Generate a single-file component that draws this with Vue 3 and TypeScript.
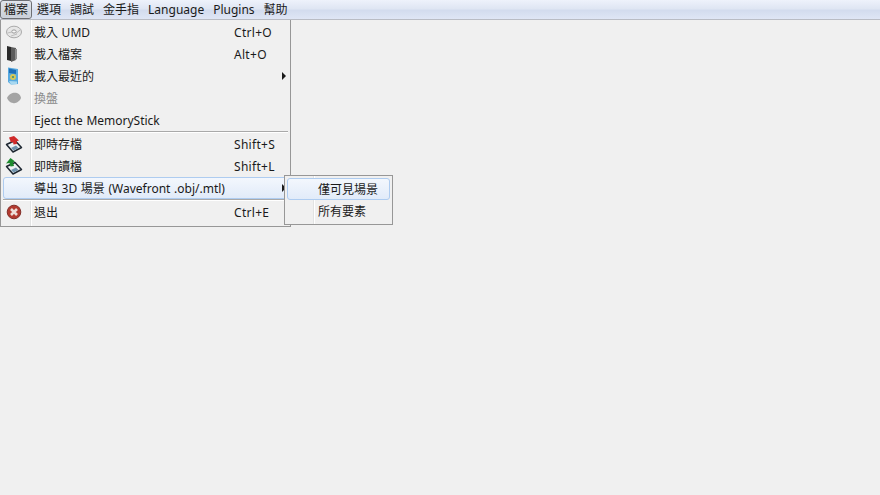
<script setup lang="ts">
interface Item {
  label: string
  shortcut?: string
  icon?: string
  arrow?: boolean
  disabled?: boolean
  active?: boolean
}

const menus = ['檔案', '選項', '調試', '金手指', 'Language', 'Plugins', '幫助']

const groups: Item[][] = [
  [
    { label: '載入 UMD', shortcut: 'Ctrl+O', icon: 'disc' },
    { label: '載入檔案', shortcut: 'Alt+O', icon: 'book' },
    { label: '載入最近的', icon: 'recent', arrow: true },
    { label: '換盤', icon: 'swap', disabled: true },
    { label: 'Eject the MemoryStick' },
  ],
  [
    { label: '即時存檔', shortcut: 'Shift+S', icon: 'save' },
    { label: '即時讀檔', shortcut: 'Shift+L', icon: 'load' },
    { label: '導出 3D 場景 (Wavefront .obj/.mtl)', arrow: true, active: true },
  ],
  [{ label: '退出', shortcut: 'Ctrl+E', icon: 'exit' }],
]

const subItems = [
  { label: '僅可見場景', active: true },
  { label: '所有要素', active: false },
]
</script>

<template>
  <div class="app">
    <nav class="menubar">
      <span v-for="(m, i) in menus" :key="m" class="top" :class="{ open: i === 0 }">{{ m }}</span>
    </nav>

    <div class="menu">
      <template v-for="(group, g) in groups" :key="g">
        <div v-if="g > 0" class="sep"></div>
        <div
          v-for="item in group"
          :key="item.label"
          class="row"
          :class="{ active: item.active, disabled: item.disabled }"
        >
          <span class="icon">
            <svg v-if="item.icon === 'disc'" width="18" height="16" viewBox="0 0 18 16">
              <ellipse cx="9" cy="8" rx="7.5" ry="5.8" fill="#e6e6e6" stroke="#aaaaaa" />
              <ellipse cx="9" cy="7.5" rx="2.2" ry="1.6" fill="#f8f8f8" stroke="#9a9a9a" />
              <path d="M2.5 9 L7 8 M11 9.5 L15 6 M6 12 L12 10" stroke="#bdbdbd" />
            </svg>
            <svg v-else-if="item.icon === 'book'" width="18" height="18" viewBox="0 0 18 18" class="nudge-book">
              <path d="M3 1 L7 2 L7 16 L3 15 Z" fill="#2a2a2a" />
              <path d="M7 2 L12 3 L12 15 L7 17 Z" fill="#5c5c5c" />
              <path d="M11 4 L13 4 L13 14 L11 15 Z" fill="#8f8f8f" />
            </svg>
            <svg v-else-if="item.icon === 'recent'" width="18" height="18" viewBox="0 0 18 18" class="nudge-recent">
              <path d="M4 0.5 L14 2 L14 17 L7 17.5 L4 15 Z" fill="#57a9df" />
              <path d="M5 1.5 L12 3 L12 7 L5 6 Z" fill="#1f6fb8" />
              <circle cx="9" cy="10" r="3" fill="#d6c856" />
              <circle cx="9" cy="10" r="1.1" fill="#3f8f7f" />
              <path d="M5 14 L13 14.5 L13 17 L7 17.5 Z" fill="#a8d8f0" />
            </svg>
            <svg v-else-if="item.icon === 'swap'" width="18" height="14" viewBox="0 0 18 14">
              <path d="M2 7 C4 2 9 1 12 2 C15 3 16 6 16 7 C15 10 11 13 8 12 C5 12 3 9 2 7 Z" fill="#a4a4a4" />
            </svg>
            <svg v-else-if="item.icon === 'save' || item.icon === 'load'" width="18" height="18" viewBox="0 0 18 18">
              <path d="M1.5 9.5 L10 5.5 L16.5 12.5 L8 17 Z" fill="#eef2f5" stroke="#1d2630" stroke-width="1.5" stroke-linejoin="round" />
              <path d="M6 13 L11 10.5 L13.5 13 L8.5 15.5 Z" fill="#6f93ad" />
              <path
                v-if="item.icon === 'save'"
                d="M4 2.5 L9 1 L14 5.5 L11.5 6.2 L12 9 L8.5 9.5 L8 7 L6 7.5 Z"
                fill="#cf2a2a"
              />
              <path v-else d="M1 6.5 L5.5 1 L10 4.5 L8 5.2 L9 9 L5.5 9.5 L4.5 6 Z" fill="#1c8a2e" />
            </svg>
            <svg v-else-if="item.icon === 'exit'" width="16" height="16" viewBox="0 0 16 16">
              <circle cx="8" cy="8" r="6.8" fill="#b23a30" stroke="#83302a" />
              <path d="M5 5 L11 11 M11 5 L5 11" stroke="#eedfd9" stroke-width="2.6" />
            </svg>
          </span>
          <span class="label">{{ item.label }}</span>
          <span v-if="item.shortcut" class="shortcut">{{ item.shortcut }}</span>
          <span v-if="item.arrow" class="arrow"></span>
        </div>
      </template>
    </div>

    <div class="submenu">
      <div v-for="s in subItems" :key="s.label" class="sub-row" :class="{ active: s.active }">
        <span class="sub-label">{{ s.label }}</span>
      </div>
    </div>
  </div>
</template>

<style scoped>
.app {
  position: relative;
  width: 880px;
  height: 495px;
  overflow: hidden;
  background: #f0f0f0;
  color: #1a1a1a;
  font-family: "Noto Sans", "Noto Sans CJK TC", sans-serif;
  font-size: 12px;
}
.menubar {
  display: flex;
  align-items: center;
  height: 20px;
  box-sizing: border-box;
  border-bottom: 1px solid #b9bcc4;
  background: linear-gradient(#eef2fb 0%, #dfe6f3 45%, #d3dcee 55%, #dfe6f5 100%);
}
.top {
  padding: 0 3px;
  margin-right: 1px;
  line-height: 17px;
  border: 1px solid transparent;
  border-radius: 3px;
}
.top.open {
  border-color: #6d6f74;
  background: linear-gradient(#dfe3ea, #c9cfd9);
  box-shadow: inset 0 0 1px #fff;
}
.menu {
  position: absolute;
  left: 0;
  top: 20px;
  width: 291px;
  box-sizing: border-box;
  padding: 1px 2px 3px 2px;
  border: 1px solid #979797;
  border-top: none;
  background: linear-gradient(to right, #f0f0f0 29px, #e2e3e3 29px, #e2e3e3 30px, #fff 30px, #fff 31px, #f0f0f0 31px);
}
.row {
  display: flex;
  align-items: center;
  height: 22px;
  box-sizing: border-box;
  position: relative;
  border: 1px solid transparent;
  border-radius: 3px;
}
.row.active {
  border-color: #aeccf0;
  background: linear-gradient(#f3f7fd, #e1ebf9);
}
.row.disabled {
  color: #8a8a8a;
}
.icon {
  flex: none;
  width: 30px;
  height: 20px;
  display: flex;
  align-items: center;
  justify-content: center;
  padding-right: 10px;
  box-sizing: border-box;
}
.nudge-book {
  margin-left: -3px;
}
.nudge-recent {
  margin-left: -2px;
}
.label {
  flex: none;
  width: 200px;
  white-space: nowrap;
  word-spacing: 0.5px;
}
.shortcut {
  white-space: nowrap;
  letter-spacing: 0.3px;
}
.arrow {
  position: absolute;
  left: 278px;
  top: 50%;
  margin-top: -4px;
  border-left: 4px solid #1a1a1a;
  border-top: 4px solid transparent;
  border-bottom: 4px solid transparent;
}
.sep {
  height: 2px;
  border-top: 1px solid #a9a9a9;
  background: #fff;
  box-sizing: border-box;
}
.submenu {
  position: absolute;
  left: 284px;
  top: 175px;
  width: 109px;
  box-sizing: border-box;
  padding: 2px;
  border: 1px solid #979797;
  background: linear-gradient(to right, #f0f0f0 28px, #e2e3e3 28px, #e2e3e3 29px, #fff 29px, #fff 30px, #f0f0f0 30px);
}
.sub-row {
  height: 22px;
  box-sizing: border-box;
  display: flex;
  align-items: center;
  padding-left: 30px;
  border: 1px solid transparent;
  border-radius: 3px;
}
.sub-row.active {
  border-color: #aeccf0;
  background: linear-gradient(#f3f7fd, #e1ebf9);
}
</style>
